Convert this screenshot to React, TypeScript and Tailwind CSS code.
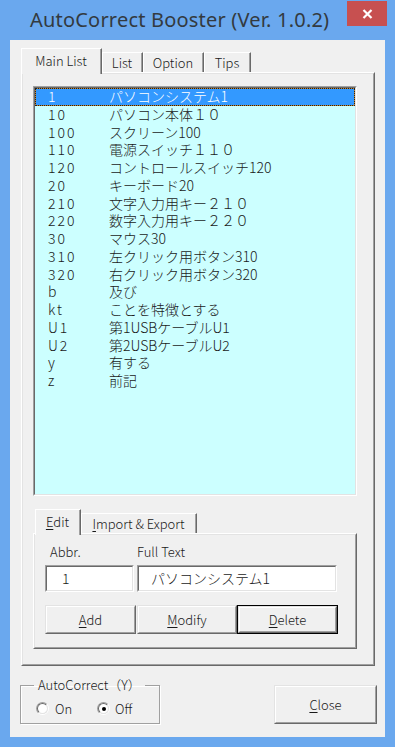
import React from 'react';

type Row = { abbr: string; text: string };

const ROWS: Row[] = [
  { abbr: '1', text: 'パソコンシステム1' },
  { abbr: '10', text: 'パソコン本体１０' },
  { abbr: '100', text: 'スクリーン100' },
  { abbr: '110', text: '電源スイッチ１１０' },
  { abbr: '120', text: 'コントロールスイッチ120' },
  { abbr: '20', text: 'キーボード20' },
  { abbr: '210', text: '文字入力用キー２１０' },
  { abbr: '220', text: '数字入力用キー２２０' },
  { abbr: '30', text: 'マウス30' },
  { abbr: '310', text: '左クリック用ボタン310' },
  { abbr: '320', text: '右クリック用ボタン320' },
  { abbr: 'b', text: '及び' },
  { abbr: 'kt', text: 'ことを特徴とする' },
  { abbr: 'U1', text: '第1USBケーブルU1' },
  { abbr: 'U2', text: '第2USBケーブルU2' },
  { abbr: 'y', text: '有する' },
  { abbr: 'z', text: '前記' },
];

// classic 3D edges
function Sunken({ className = '', children }: { className?: string; children?: React.ReactNode }) {
  return (
    <div className={`border border-t-[#a0a0a0] border-l-[#a0a0a0] border-b-white border-r-white ${className}`}>
      <div className="h-full border border-t-[#696969] border-l-[#696969] border-b-[#e3e3e3] border-r-[#e3e3e3]">
        {children}
      </div>
    </div>
  );
}

function Button({ label, hot, className = '', isDefault = false }: { label: string; hot: number; className?: string; isDefault?: boolean }) {
  const inner = (
    <div className="h-full border border-t-[#e3e3e3] border-l-[#e3e3e3] border-b-[#696969] border-r-[#696969]">
      <div className="h-full flex items-center justify-center border border-t-white border-l-white border-b-[#a0a0a0] border-r-[#a0a0a0] text-[13px] font-light text-[#1a1a1a]">
        <span>
          {label.slice(0, hot)}
          <span className="underline underline-offset-2">{label[hot]}</span>
          {label.slice(hot + 1)}
        </span>
      </div>
    </div>
  );
  return isDefault ? (
    <div className={`border border-black ${className}`}>{inner}</div>
  ) : (
    <div className={className}>{inner}</div>
  );
}

function Tab({ label, hot, selected, className = '' }: { label: string; hot?: number; selected?: boolean; className?: string }) {
  const text =
    hot === undefined ? (
      label
    ) : (
      <>
        {label.slice(0, hot)}
        <span className="underline underline-offset-2">{label[hot]}</span>
        {label.slice(hot + 1)}
      </>
    );
  if (selected) {
    return (
      <div className={`relative top-[2px] z-10 h-[26px] bg-[#f0f0f0] border-t border-l border-white border-r border-r-[#696969] ${className}`}>
        <div className="h-full flex items-start justify-center pt-[2px] border-r border-[#a0a0a0] text-[13px] font-light text-[#1a1a1a]">
          {text}
        </div>
      </div>
    );
  }
  return (
    <div className={`h-[20px] border-t border-l border-white border-r border-r-[#696969] ${className}`}>
      <div className="h-full flex items-center justify-center border-r border-[#a0a0a0] text-[13px] font-light text-[#1a1a1a]">
        {text}
      </div>
    </div>
  );
}

function Page({ className = '', children }: { className?: string; children?: React.ReactNode }) {
  return (
    <div className={`border border-t-white border-l-white border-b-[#696969] border-r-[#696969] ${className}`}>
      <div className="h-full border border-t-[#e3e3e3] border-l-[#e3e3e3] border-b-[#a0a0a0] border-r-[#a0a0a0]">
        {children}
      </div>
    </div>
  );
}

function Radio({ checked }: { checked?: boolean }) {
  return (
    <div className="w-[13px] h-[13px] rounded-full border border-t-[#a0a0a0] border-l-[#a0a0a0] border-b-white border-r-white">
      <div className="w-full h-full rounded-full bg-white border border-t-[#696969] border-l-[#696969] border-b-[#e3e3e3] border-r-[#e3e3e3] flex items-center justify-center">
        {checked && <div className="w-[4px] h-[4px] rounded-full bg-black" />}
      </div>
    </div>
  );
}

export default function App() {
  return (
    <div className="w-[395px] h-[747px] bg-[#6aa8ee] flex flex-col font-['Noto_Sans_CJK_JP','Noto_Sans',sans-serif]">
      {/* title bar */}
      <div className="h-[40px] flex items-start">
        <div className="flex-1 pl-[30px] pt-[7px] text-[20px] leading-[26px] text-[#333a40] font-['Noto_Sans',sans-serif] tracking-[0.2px]">
          AutoCorrect Booster (Ver. 1.0.2)
        </div>
        <div className="mt-[1px] mr-[8px] w-[40px] h-[25px] bg-[#c75050] flex items-center justify-center">
          <svg width="11" height="10" viewBox="0 0 11 10">
            <path d="M1.5 1 L9.5 9 M9.5 1 L1.5 9" stroke="#fff" strokeWidth="2.2" />
          </svg>
        </div>
      </div>

      {/* client area */}
      <div className="mx-[10px] h-[697px] bg-[#f0f0f0] flex flex-col">
        <div className="pl-[11px] pr-[10px] pt-[8px]">
          {/* main tabs */}
          <div className="h-[24px] flex items-end">
            <Tab label="Main List" selected className="w-[81px]" />
            <Tab label="List" className="w-[41px]" />
            <Tab label="Option" className="w-[61px]" />
            <Tab label="Tips" className="w-[47px]" />
          </div>
          <Page className="h-[594px]">
            <div className="pl-[10px] pt-[12px]">
              {/* list box */}
              <Sunken className="w-[324px] h-[410px]">
                <div className="h-full bg-[#ccffff] text-[14px] leading-[17.75px] font-light text-[#1a1a1a]">
                  {ROWS.map((r, i) =>
                    i === 0 ? (
                      <div key={r.abbr} className="h-[17.75px] bg-[#c8862c] border border-dotted border-[#202020]">
                        <div className="h-full bg-[#3399ff] text-white flex items-center">
                          <span className="w-[73px] pl-[12px] tracking-[2px]">{r.abbr}</span>
                          <span>{r.text}</span>
                        </div>
                      </div>
                    ) : (
                      <div key={r.abbr} className="h-[17.75px] flex items-center">
                        <span className="w-[74px] pl-[13px] tracking-[2px]">{r.abbr}</span>
                        <span>{r.text}</span>
                      </div>
                    )
                  )}
                </div>
              </Sunken>

              {/* edit tabs */}
              <div className="mt-[14px] w-[324px]">
                <div className="h-[23px] flex items-end pl-[2px]">
                  <Tab label="Edit" hot={0} selected className="w-[46px]" />
                  <Tab label="Import & Export" hot={0} className="w-[116px]" />
                </div>
                <Page className="h-[116px]">
                  <div className="pl-[10px] pt-[9px] flex flex-col">
                    <div className="flex text-[13px] leading-[16px] font-light text-[#1a1a1a]">
                      <span className="w-[92px] pl-[5px]">Abbr.</span>
                      <span>Full Text</span>
                    </div>
                    <div className="mt-[5px] flex gap-[3px]">
                      <Sunken className="w-[89px] h-[27px]">
                        <div className="h-full bg-white flex items-center pl-[15px] text-[14px] font-light text-[#1a1a1a]">
                          1
                        </div>
                      </Sunken>
                      <Sunken className="w-[200px] h-[27px]">
                        <div className="h-full bg-white flex items-center pl-[12px] text-[14px] font-light text-[#1a1a1a]">
                          パソコンシステム1
                        </div>
                      </Sunken>
                    </div>
                    <div className="mt-[13px] flex">
                      <Button label="Add" hot={0} className="w-[91px] h-[29px]" />
                      <Button label="Modify" hot={0} className="ml-[1px] w-[100px] h-[29px]" />
                      <Button label="Delete" hot={0} isDefault className="w-[101px] h-[29px]" />
                    </div>
                  </div>
                </Page>
              </div>
            </div>
          </Page>
        </div>

        {/* bottom row */}
        <div className="mt-[12px] pl-[10px] pr-[8px] flex items-start justify-between">
          <fieldset className="w-[140px] h-[46px] border border-[#a0a0a0] shadow-[inset_1px_1px_0_#fff,1px_1px_0_#fff] pl-[13px]">
            <legend className="px-[4px] text-[13px] leading-[14px] font-light text-[#1a1a1a]">AutoCorrect（Y）</legend>
            <div className="mt-[7px] ml-[2px] flex items-center text-[13px] font-light text-[#1a1a1a]">
              <Radio />
              <span className="ml-[6px] w-[42px]">On</span>
              <Radio checked />
              <span className="ml-[5px]">Off</span>
            </div>
          </fieldset>
          <Button label="Close" hot={0} className="mt-[7px] w-[103px] h-[39px]" />
        </div>
      </div>
      <div className="flex-1" />
    </div>
  );
}
